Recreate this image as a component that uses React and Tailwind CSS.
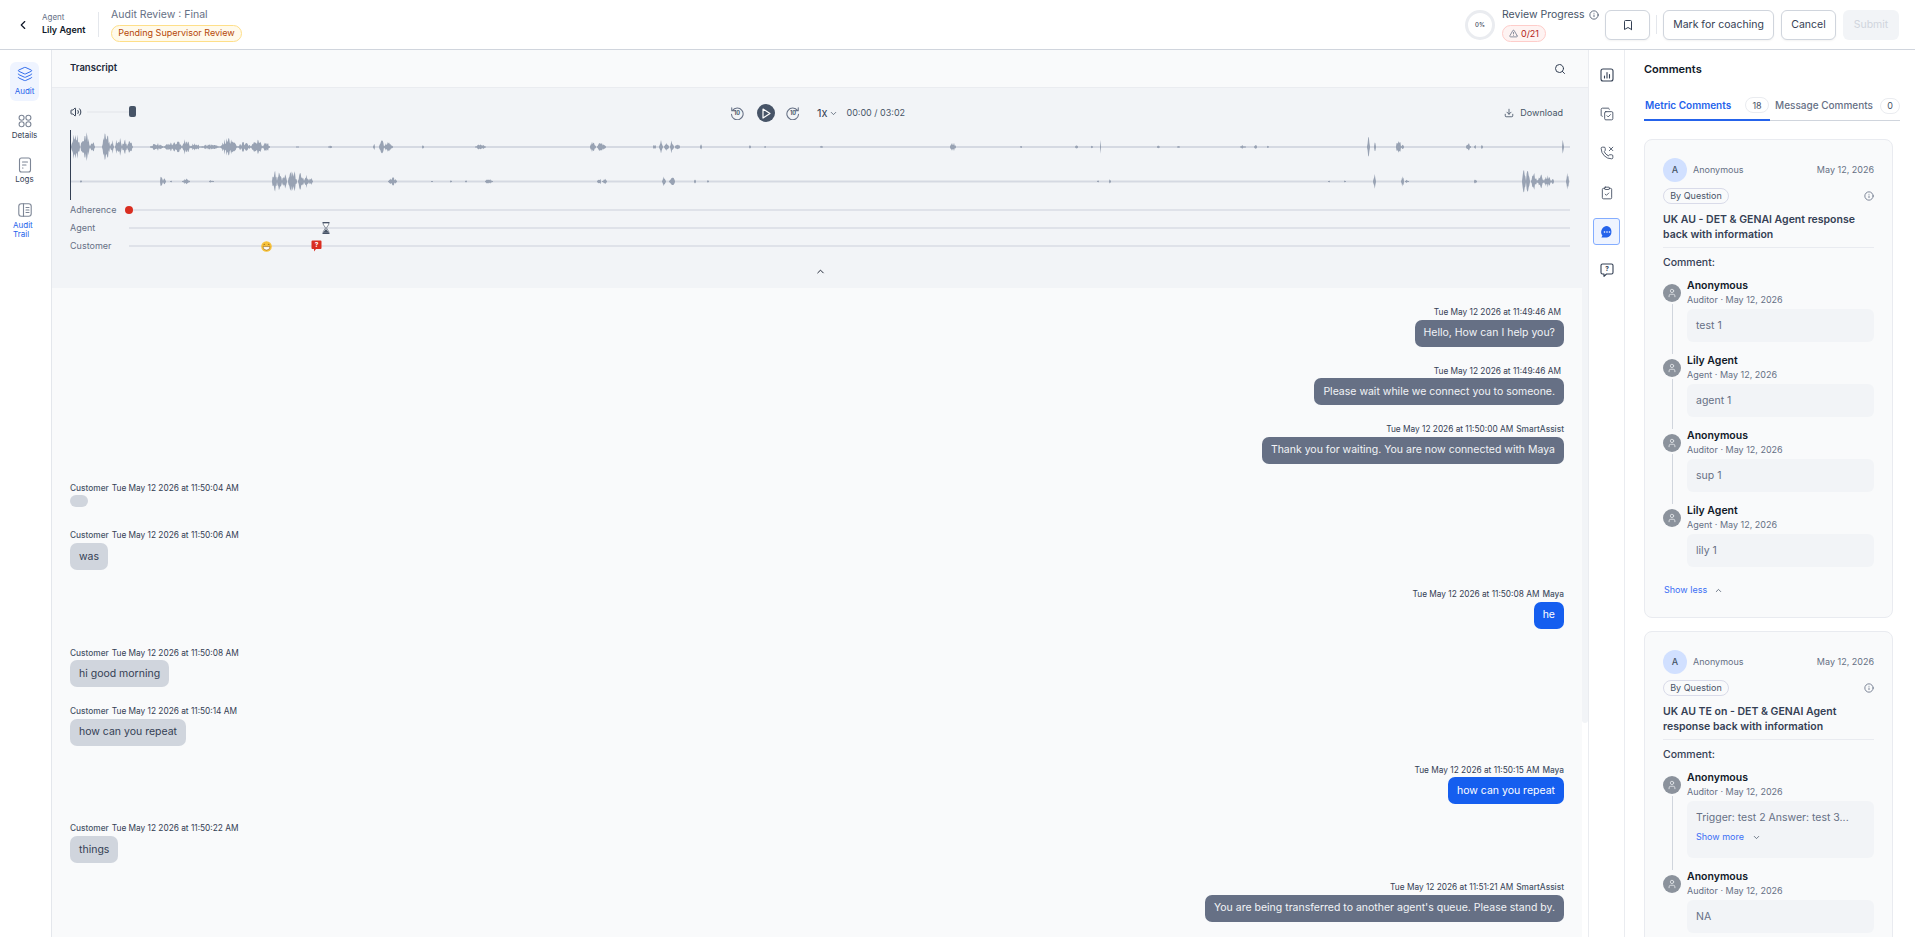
import React from 'react'
import { ChevronLeft, ChevronDown, ChevronUp, Layers, Search, Download, Volume2, Bookmark, Info, TriangleAlert, CopyCheck, PhoneMissed, ClipboardCheck, User } from 'lucide-react'

// blobs on the waveform: [x, width, amplitude], x from the left edge of the player
const laneOne = [[1, 9, 17], [10.5, 9.5, 18], [20, 5, 7], [32, 8, 17], [40, 4, 8], [45, 7, 13], [52, 5, 9], [57, 6, 7],
  [80, 14, 4], [94, 12, 5], [102, 10, 7], [112, 8, 9], [120, 10, 5], [130, 20, 3], [150, 17, 10], [167, 14, 5], [181, 12, 8], [193, 7, 6],
  [226, 3, 1], [258, 4, 2], [303, 2, 4], [309, 5, 11], [314, 9, 6], [352, 2, 3], [405, 11, 3], [520, 6, 7], [527, 9, 5],
  [583, 3, 3], [589, 4, 7], [594, 5, 5], [600, 4, 8], [605, 5, 4], [630, 2, 3], [679, 2, 2], [694, 2, 1], [750, 3, 2], [880, 6, 6], [950, 2, 2], [1005, 3, 2], [1021, 2, 2],
  [1030, 1, 9], [1087, 3, 2], [1107, 3, 1], [1170, 6, 2], [1184, 3, 3], [1197, 2, 2], [1297, 3, 13], [1304, 2, 6], [1326, 5, 12], [1331, 3, 3], [1396, 5, 4], [1404, 2, 3], [1411, 2, 3], [1492, 2, 13]]

const laneTwo = [[10, 2, 2], [90, 3, 9], [93, 3, 5], [100, 2, 1], [112, 8, 3], [139, 5, 2], [202, 5, 13], [207, 5, 10], [212, 5, 8], [218, 9, 14], [228, 6, 10], [234, 5, 7], [239, 4, 5],
  [318, 9, 5], [361, 2, 1], [380, 2, 2], [395, 2, 1], [415, 8, 3], [527, 4, 5], [532, 5, 3], [592, 4, 6], [599, 6, 6], [624, 2, 3], [637, 2, 2],
  [1027, 2, 2], [1039, 2, 3], [1258, 2, 1], [1274, 2, 1], [1303, 3, 8], [1331, 3, 7], [1335, 4, 2], [1404, 3, 3], [1452, 4, 13], [1456, 4, 15], [1461, 6, 9], [1467, 7, 8], [1474, 7, 8], [1481, 3, 4], [1496, 3, 9]]

const noise = (n) => {
  const v = Math.sin(n * 12.9898 + 1.7) * 43758.5453
  return v - Math.floor(v)
}

const blobPath = (blobs, mid) => {
  let d = ''
  blobs.forEach(([x, w, a], b) => {
    const top = []
    const bottom = []
    const steps = Math.max(2, Math.round(w * 1.5))
    for (let i = 0; i <= steps; i++) {
      const t = i / steps
      const env = Math.pow(Math.sin(Math.PI * t), 0.8)
      const px = x + t * w
      const spike = 0.3 + 0.7 * noise(b * 31 + i * 3)
      top.push(`${px.toFixed(1)} ${(mid - Math.max(0.4, a * env * spike)).toFixed(1)}`)
      bottom.unshift(`${px.toFixed(1)} ${(mid + Math.max(0.4, a * env * spike * 0.95)).toFixed(1)}`)
    }
    d += `M${top.join('L')}L${bottom.join('L')}Z`
  })
  return d
}

function Waveform() {
  return (
    <svg width="1500" height="70" viewBox="0 0 1500 70" className="block">
      <rect x="0" y="16" width="1500" height="2" fill="#d5d9e2" />
      <rect x="0" y="50.5" width="1500" height="2" fill="#d5d9e2" />
      <path d={blobPath(laneOne, 17)} fill="#98a2b3" />
      <path d={blobPath(laneTwo, 51.5)} fill="#98a2b3" />
      <rect x="0" y="0" width="1" height="70" fill="#344054" />
    </svg>
  )
}

function SkipIcon({ back }) {
  return (
    <svg width="14" height="14" viewBox="0 0 24 24" fill="none" stroke="#667085" strokeWidth="1.8" strokeLinecap="round" strokeLinejoin="round">
      {back
        ? <path d="M3 3v5h5M4.200 8A10 10 0 1 1 2.500 14" />
        : <path d="M21 3v5h-5M19.800 8A10 10 0 1 0 21.500 14" />}
      <text x="12" y="16" textAnchor="middle" fontSize="9.500" fontWeight="700" stroke="none" fill="#475467">10</text>
    </svg>
  )
}

const DetailsIcon = () => (
  <svg width="14" height="16" viewBox="0 0 14 16" fill="none" stroke="#7d8696" strokeWidth="1.100">
    <circle cx="3.600" cy="4.700" r="2.500" /><circle cx="10.400" cy="4.700" r="2.500" /><circle cx="3.600" cy="11.300" r="2.500" /><circle cx="10.400" cy="11.300" r="2.500" />
  </svg>
)
const LogsIcon = () => (
  <svg width="14" height="16" viewBox="0 0 14 16" fill="none" stroke="#7d8696" strokeWidth="1.100" strokeLinecap="round">
    <rect x="1.500" y="1" width="11" height="14" rx="2" /><path d="M4.500 5h5M4.500 8h3.500M4.500 11h0.500" />
  </svg>
)
const TrailIcon = () => (
  <svg width="14" height="16" viewBox="0 0 14 16" fill="none" stroke="#7d8696" strokeWidth="1.100" strokeLinecap="round">
    <rect x="0.800" y="1.800" width="12.400" height="12.400" rx="2.500" /><path d="M5.500 1.800v12.400M8 5.500h3M8 8h3M8 10.500h3" />
  </svg>
)
const ChartIcon = () => (
  <svg width="14" height="14" viewBox="0 0 14 14" fill="none" stroke="#344054" strokeWidth="1.100" strokeLinecap="round">
    <rect x="1" y="1" width="12" height="12" rx="2" /><path d="M4.500 10V8M7 10V4.500M9.500 10V6.500" />
  </svg>
)
const ChatFilled = () => (
  <svg width="14" height="14" viewBox="0 0 14 14">
    <path d="M7 1a6 6 0 0 1 0 11.600H1.400l1-2A6 6 0 0 1 7 1z" fill="#2563eb" />
    <circle cx="4.500" cy="7" r="0.800" fill="#fff" /><circle cx="7" cy="7" r="0.800" fill="#fff" /><circle cx="9.500" cy="7" r="0.800" fill="#fff" />
  </svg>
)
const QuestionChat = () => (
  <svg width="14" height="14" viewBox="0 0 14 14" fill="none" stroke="#344054" strokeWidth="1.100" strokeLinejoin="round">
    <path d="M2.500 1h9A1.500 1.500 0 0 1 13 2.500v7a1.500 1.500 0 0 1-1.500 1.500H6.500L4 13.300V11H2.500A1.500 1.500 0 0 1 1 9.500v-7A1.500 1.500 0 0 1 2.500 1z" />
    <text x="7" y="8" textAnchor="middle" fontSize="6.500" fontWeight="700" stroke="none" fill="#344054">?</text>
  </svg>
)

const Hourglass = () => (
  <svg width="8" height="12" viewBox="0 0 8 12">
    <path d="M0.500 0.500h7M0.500 11.500h7" stroke="#475467" strokeWidth="1" />
    <path d="M1 1h6c0 2-2 3.500-2.500 5 .5 1.500 2.500 3 2.500 5H1c0-2 2-3.500 2.500-5C3 4.500 1 3 1 1z" fill="#fff" stroke="#475467" strokeWidth="0.700" />
    <path d="M1.300 10.800C1.800 9 4 8 4 6.500c0 1.500 2.200 2.500 2.700 4.300z" fill="#475467" />
  </svg>
)
const Grin = () => (
  <svg width="11" height="11" viewBox="0 0 11 11">
    <circle cx="5.500" cy="5.500" r="5.300" fill="#f7c23c" />
    <path d="M2.500 3.800q.8-.9 1.600 0M6.900 3.800q.8-.9 1.600 0" stroke="#7c4a03" strokeWidth="0.700" fill="none" />
    <path d="M2 5.600h7a3.500 3.500 0 0 1-7 0z" fill="#fff" stroke="#7c4a03" strokeWidth="0.500" />
  </svg>
)
const RedQuestion = () => (
  <svg width="11" height="12" viewBox="0 0 11 12">
    <path d="M1.500 0.500h8a1 1 0 0 1 1 1v6.500a1 1 0 0 1-1 1H5L3 11.500V9H1.500a1 1 0 0 1-1-1V1.500a1 1 0 0 1 1-1z" fill="#d92d20" />
    <text x="5.500" y="7" textAnchor="middle" fontSize="6.500" fontWeight="700" fill="#fff">?</text>
  </svg>
)

function Track({ label, children }) {
  return (
    <div className="relative flex items-center h-[18px]">
      <span className="w-[59px] text-[9px] text-[#667085]">{label}</span>
      <div className="flex-1 h-[2px] bg-[#dfe2e9]" />
      {children}
    </div>
  )
}

function Message({ side, who, time, text, color, empty }) {
  const right = side === 'right'
  return (
    <div className={`flex flex-col ${right ? 'items-end' : 'items-start'} ${empty ? 'mb-[22px]' : 'mb-[18px]'}`}>
      <div className="h-[13.600px] text-[8.300px] leading-[13px] text-[#344054] flex gap-[3px]">
        {!right && who && <span className="text-[#475467] font-medium">{who}</span>}
        <span className={right && !who ? 'mr-[3px]' : ''}>{time}</span>
        {right && who && <span className="text-[#475467] font-medium">{who}</span>}
      </div>
      {empty
        ? <div className="w-[18px] h-[12px] rounded-md bg-[#d0d5dd]" />
        : <div className={`h-[27px] flex items-center px-[9px] rounded-[7px] text-[10.500px] ${color}`}>{text}</div>}
    </div>
  )
}

const bot = 'bg-[#667085] text-[#f2f4f7]'
const agent = 'bg-[#155eef] text-white'
const customer = 'bg-[#d0d5dd] text-[#344054]'

const messages = [
  { side: 'right', time: 'Tue May 12 2026 at 11:49:46 AM', text: 'Hello, How can I help you?', color: bot },
  { side: 'right', time: 'Tue May 12 2026 at 11:49:46 AM', text: 'Please wait while we connect you to someone.', color: bot },
  { side: 'right', who: 'SmartAssist', time: 'Tue May 12 2026 at 11:50:00 AM', text: 'Thank you for waiting. You are now connected with Maya', color: bot },
  { side: 'left', who: 'Customer', time: 'Tue May 12 2026 at 11:50:04 AM', empty: true },
  { side: 'left', who: 'Customer', time: 'Tue May 12 2026 at 11:50:06 AM', text: 'was', color: customer },
  { side: 'right', who: 'Maya', time: 'Tue May 12 2026 at 11:50:08 AM', text: 'he', color: agent },
  { side: 'left', who: 'Customer', time: 'Tue May 12 2026 at 11:50:08 AM', text: 'hi good morning', color: customer },
  { side: 'left', who: 'Customer', time: 'Tue May 12 2026 at 11:50:14 AM', text: 'how can you repeat', color: customer },
  { side: 'right', who: 'Maya', time: 'Tue May 12 2026 at 11:50:15 AM', text: 'how can you repeat', color: agent },
  { side: 'left', who: 'Customer', time: 'Tue May 12 2026 at 11:50:22 AM', text: 'things', color: customer },
  { side: 'right', who: 'SmartAssist', time: 'Tue May 12 2026 at 11:51:21 AM', text: "You are being transferred to another agent's queue. Please stand by.", color: bot },
]

function ThreadItem({ name, role, text, more, last }) {
  return (
    <div className="flex gap-[6px]">
      <div className="w-[18px] flex flex-col items-center shrink-0 pt-[5px]">
        <div className="w-[18px] h-[18px] rounded-full bg-[#8b929c] flex items-center justify-center shrink-0">
          <User size={10} color="#e5e7eb" />
        </div>
        {!last && <div className="w-px flex-1 bg-[#d0d5dd] mt-[2px]" />}
      </div>
      <div className="flex-1 pb-[12px]">
        <div className="text-[10.500px] leading-[14px] font-semibold text-[#101828]">{name}</div>
        <div className="text-[9px] leading-[14px] text-[#667085]">{role} · May 12, 2026</div>
        <div className="mt-[2px] bg-[#f2f4f7] rounded-md px-[9px] py-[9px] text-[10.500px] leading-[15px] text-[#667085]">
          {text}
          {more && (
            <div className="flex items-center gap-[8px] mt-[6px] mb-[6px] text-[9px] leading-[12px] text-[#3b6ff5]">
              Show more <ChevronDown size={9} color="#475467" />
            </div>
          )}
        </div>
      </div>
    </div>
  )
}

function CommentCard({ title, items, footer }) {
  return (
    <div className="border border-[#e9ebf0] rounded-lg bg-[#f9fafb] px-[18px] pt-[18px] pb-[3px] mb-[13px] w-[249px]">
      <div className="flex items-center justify-between">
        <div className="flex items-center gap-[6px]">
          <div className="w-[24px] h-[24px] rounded-full bg-[#d1e0ff] flex items-center justify-center text-[9px] font-medium text-[#475467]">A</div>
          <span className="text-[9px] text-[#667085]">Anonymous</span>
        </div>
        <span className="text-[9px] text-[#667085]">May 12, 2026</span>
      </div>
      <div className="flex items-center justify-between mt-[6px]">
        <span className="h-[16px] w-[66px] flex items-center justify-center rounded-full border border-[#d9dbe9] text-[9px] text-[#475467]">By Question</span>
        <Info size={10} color="#667085" />
      </div>
      <div className="mt-[8px] text-[10.500px] leading-[15px] font-semibold text-[#344054] pb-[5px] border-b border-[#e9ebf0]">{title}</div>
      <div className="mt-[8px] text-[10.500px] leading-[14px] font-medium text-[#344054] mb-[9px]">Comment:</div>
      {items.map((item, i) => <ThreadItem key={i} {...item} last={i === items.length - 1} />)}
      {footer}
    </div>
  )
}

export default function App() {
  return (
    <div className="h-screen overflow-hidden flex flex-col bg-white [font-family:Inter,sans-serif]">
      <header className="h-[50px] shrink-0 border-b border-[#d0d5dd] flex items-center pl-[16px] pr-[16px]">
        <ChevronLeft size={14} color="#101828" />
        <div className="ml-[12px] w-[56px]">
          <div className="text-[8px] leading-[10px] text-[#667085]">Agent</div>
          <div className="text-[9px] leading-[14px] font-semibold text-[#101828] mt-[1px]">Lily Agent</div>
        </div>
        <div className="h-[25px] w-px bg-[#e4e7ec]" />
        <div className="ml-[12px]">
          <div className="text-[10.500px] leading-[15px] text-[#667085] -mt-[1px]">Audit Review : Final</div>
          <div className="mt-[3px] h-[17px] w-[131px] flex items-center justify-center rounded-full bg-[#fffaeb] border border-[#fedf89] text-[9px] text-[#b54708]">Pending Supervisor Review</div>
        </div>
        <div className="ml-auto flex items-center">
          <div className="w-[30px] h-[30px] rounded-full border-[3px] border-[#eaecf0] flex items-center justify-center text-[6px] font-medium text-[#344054]">0%</div>
          <div className="ml-[7px] w-[103px]">
            <div className="flex items-center gap-[4px] text-[10.500px] leading-[15px] text-[#475467]">Review Progress <Info size={10} color="#475467" /></div>
            <div className="mt-[3px] h-[17px] w-[44px] flex items-center justify-center gap-[3px] rounded-full bg-[#fef3f2] border border-[#fecdca] text-[9px] text-[#b42318]">
              <TriangleAlert size={9} color="#667085" /> 0/21
            </div>
          </div>
          <button className="w-[45px] h-[30px] rounded-md border border-[#d0d5dd] bg-white flex items-center justify-center shadow-xs">
            <Bookmark size={12} color="#344054" />
          </button>
          <div className="w-px h-[19px] bg-[#e4e7ec] mx-[6px]" />
          <button className="w-[111px] h-[30px] rounded-md border border-[#d0d5dd] bg-white text-[10.500px] text-[#344054] shadow-xs">Mark for coaching</button>
          <button className="ml-[7px] w-[55px] h-[30px] rounded-md border border-[#d0d5dd] bg-white text-[10.500px] text-[#344054] shadow-xs">Cancel</button>
          <button className="ml-[7px] w-[56px] h-[30px] rounded-md bg-[#f2f4f7] text-[10.500px] text-[#d0d5dd]">Submit</button>
        </div>
      </header>

      <div className="flex-1 flex min-h-0">
        <nav className="w-[52px] shrink-0 border-r border-[#e4e7ec] flex flex-col pt-[12px] pl-[10px]">
          <div className="w-[29px] h-[39px] pt-[4px] flex flex-col items-center rounded-md bg-[#eff4ff]">
            <Layers size={16} color="#2563eb" strokeWidth={1.4} />
            <div className="text-[8px] leading-[9px] mt-[4.500px] text-[#2563eb]">Audit</div>
          </div>
          <div className="w-[29px] mt-[11.600px] flex flex-col items-center">
            <DetailsIcon />
            <div className="text-[8px] leading-[9px] mt-[2px] text-[#344054]">Details</div>
          </div>
          <div className="w-[29px] mt-[17.500px] flex flex-col items-center">
            <LogsIcon />
            <div className="text-[8px] leading-[9px] mt-[2px] text-[#344054]">Logs</div>
          </div>
          <div className="w-[29px] mt-[17.500px] flex flex-col items-center">
            <TrailIcon />
            <div className="text-[8px] leading-[9px] mt-[3px] self-start ml-[3px] text-[#2563eb]">Audit<br />Trail</div>
          </div>
        </nav>

        <main className="w-[1536px] shrink-0 flex flex-col min-h-0">
          <div className="h-[38px] shrink-0 bg-[#f9fafb] border-b border-[#eaecf0] flex items-center justify-between pl-[18px] pr-[22px]">
            <span className="text-[9.500px] font-semibold text-[#1d2939]">Transcript</span>
            <Search size={12} color="#344054" />
          </div>
          <div className="h-[200px] shrink-0 bg-[#f2f4f7] pl-[18px] pr-[12px] pt-[16px]">
            <div className="relative flex items-center justify-between h-[18px]">
              <div className="flex items-center w-[300px] -mt-[3px]">
                <Volume2 size={12} color="#344054" />
                <div className="relative w-[49px] ml-[5px] h-[2px] bg-[#eaecf0] flex items-center justify-end">
                  <div className="w-[7px] h-[11px] rounded-[2px] bg-[#475467]" />
                </div>
              </div>
              <div className="absolute left-[660px] top-0 h-[18px] flex items-center">
                <SkipIcon back />
                <div className="ml-[13px] w-[18px] h-[18px] rounded-full bg-[#475467] flex items-center justify-center">
                  <svg width="10" height="11" viewBox="0 0 10 11" fill="none" stroke="#fff" strokeWidth="1.200" strokeLinejoin="round"><path d="M2 1l7 4.500-7 4.500z" /></svg>
                </div>
                <div className="ml-[11px]"><SkipIcon /></div>
                <span className="ml-[17px] text-[11px] text-[#344054]">1x</span>
                <ChevronDown size={9} color="#475467" className="ml-[2px]" />
                <span className="ml-[8px] text-[9px] text-[#475467]">00:00 / 03:02</span>
              </div>
              <div className="flex items-center gap-[5px] pr-[13px] text-[9px] text-[#475467]">
                <Download size={10} color="#475467" className="mr-[1px]" /> Download
              </div>
            </div>
            <div className="mt-[8px]"><Waveform /></div>
            <div className="mt-[1px] w-[1500px]">
              <Track label="Adherence">
                <div className="absolute left-[55px] w-[8px] h-[8px] rounded-full bg-[#d92d20]" />
              </Track>
              <Track label="Agent">
                <div className="absolute left-[252px]"><Hourglass /></div>
              </Track>
              <Track label="Customer">
                <div className="absolute left-[191px]"><Grin /></div>
                <div className="absolute left-[241px]"><RedQuestion /></div>
              </Track>
            </div>
            <div className="w-[1500px] pl-[745px] mt-[11px]"><ChevronUp size={11} color="#101828" /></div>
          </div>
          <div className="flex-1 min-h-0 overflow-hidden flex">
            <div className="flex-1 bg-[#f9fafb] pl-[18px] pr-[18px] pt-[18px]">
              {messages.map((m, i) => <Message key={i} {...m} />)}
            </div>
            <div className="w-[6px] bg-white">
              <div className="h-[435px] bg-[#f2f4f7] rounded-b-sm" />
            </div>
          </div>
        </main>

        <aside className="w-[37px] shrink-0 bg-white border-x border-[#eaecf0] flex flex-col items-center pt-[18px]">
          <div className="h-[14px] flex items-center"><ChartIcon /></div>
          <CopyCheck size={14} color="#344054" strokeWidth={1.4} className="mt-[25px]" />
          <PhoneMissed size={14} color="#344054" strokeWidth={1.4} className="mt-[25px]" />
          <ClipboardCheck size={14} color="#344054" strokeWidth={1.4} className="mt-[26px]" />
          <div className="mt-[18px] w-[27px] h-[27px] rounded-[3px] border border-[#84adff] bg-[#eff4ff] flex items-center justify-center"><ChatFilled /></div>
          <div className="mt-[18px]"><QuestionChat /></div>
        </aside>

        <section className="flex-1 min-w-0 overflow-hidden pl-[19px] pr-[15px] pt-[13px]">
          <div className="text-[11px] leading-[13px] font-semibold text-[#101828]">Comments</div>
          <div className="mt-[15px] flex items-center h-[30px] border-b-[1.500px] border-[#d0d5dd] relative">
            <div className="flex items-center h-full w-[126px] shrink-0 border-b-[2px] border-[#2563eb] -mb-[1.500px]">
              <span className="ml-[1px] text-[10px] font-semibold text-[#2563eb] whitespace-nowrap">Metric Comments</span>
              <span className="ml-auto mr-[1px] w-[24px] h-[16px] flex items-center justify-center rounded-full border border-[#eaecf0] bg-white text-[9px] text-[#475467]">18</span>
            </div>
            <span className="ml-[5px] text-[10px] font-medium text-[#667085] whitespace-nowrap">Message Comments</span>
            <span className="ml-auto w-[20px] h-[16px] flex items-center justify-center rounded-full border border-[#eaecf0] bg-white text-[9px] text-[#475467]">0</span>
          </div>
          <div className="mt-[18px]">
            <CommentCard
              title="UK AU - DET & GENAI Agent response back with information"
              items={[
                { name: 'Anonymous', role: 'Auditor', text: 'test 1' },
                { name: 'Lily Agent', role: 'Agent', text: 'agent 1' },
                { name: 'Anonymous', role: 'Auditor', text: 'sup 1' },
                { name: 'Lily Agent', role: 'Agent', text: 'lily 1' },
              ]}
              footer={(
                <div className="flex items-center gap-[7px] pl-[1px] pt-[5px] pb-[18px] text-[9px] leading-[12px] text-[#3b6ff5]">
                  Show less <ChevronUp size={9} color="#475467" />
                </div>
              )}
            />
            <CommentCard
              title="UK AU TE on - DET & GENAI Agent response back with information"
              items={[
                { name: 'Anonymous', role: 'Auditor', text: 'Trigger: test 2 Answer: test 3...', more: true },
                { name: 'Anonymous', role: 'Auditor', text: 'NA' },
              ]}
            />
          </div>
        </section>
      </div>
    </div>
  )
}
